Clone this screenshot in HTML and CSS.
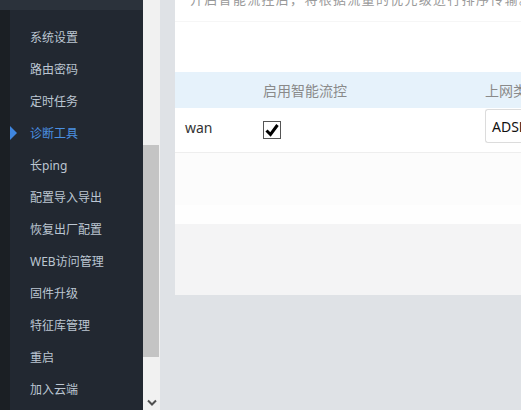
FILE: index.html
```html
<!DOCTYPE html>
<html lang="zh">
<head>
<meta charset="utf-8">
<link rel="stylesheet" href="styles.css">
</head>
<body>
<div class="app">
  <aside class="sidebar">
    <div class="side-top"></div>
    <div class="side-body">
      <div class="side-rail"></div>
      <ul class="menu">
        <li class="item">系统设置</li>
        <li class="item">路由密码</li>
        <li class="item">定时任务</li>
        <li class="item active">诊断工具</li>
        <li class="item">长ping</li>
        <li class="item">配置导入导出</li>
        <li class="item">恢复出厂配置</li>
        <li class="item">WEB访问管理</li>
        <li class="item">固件升级</li>
        <li class="item">特征库管理</li>
        <li class="item">重启</li>
        <li class="item">加入云端</li>
      </ul>
    </div>
  </aside>
  <div class="scrollbar">
    <div class="track">
      <div class="thumb"></div>
    </div>
    <div class="arrow">
      <svg width="10" height="7" viewBox="0 0 10 7"><path d="M1 1.5 L5 5.5 L9 1.5" fill="none" stroke="#505050" stroke-width="2"/></svg>
    </div>
  </div>
  <main class="main">
    <section class="panel">
      <p class="desc">开启智能流控后，将根据流量的优先级进行排序传输。</p>
      <div class="spacer"></div>
      <div class="thead">
        <span></span>
        <span>启用智能流控</span>
        <span>上网类型</span>
      </div>
      <div class="trow">
        <span class="name">wan</span>
        <span class="check">
          <svg width="18" height="18" viewBox="0 0 18 18"><rect x="0.5" y="0.5" width="17" height="17" fill="#fff" stroke="#555"/><path d="M3.5 9.5 L7.5 13.5 L14.5 4" fill="none" stroke="#000" stroke-width="3"/></svg>
        </span>
        <span class="select">ADSL拨号</span>
      </div>
      <div class="band-a"></div>
      <div class="band-b"></div>
      <div class="band-c"></div>
    </section>
  </main>
</div>
</body>
</html>
```
FILE: styles.css
```css
* { box-sizing: border-box; }
html, body { margin: 0; padding: 0; }
body {
  background: #dfe2e6;
  font-family: "Noto Sans", "Noto Sans CJK SC", sans-serif;
  overflow: hidden;
  width: 521px;
  height: 410px;
}
.app {
  display: flex;
  height: 410px;
}
.sidebar {
  width: 143px;
  flex: none;
  display: flex;
  flex-direction: column;
  background: #222831;
}
.side-top {
  height: 10px;
  background: #2b323b;
}
.side-body {
  flex: 1;
  display: flex;
}
.side-rail {
  width: 10px;
  background: #1b1f24;
}
.menu {
  list-style: none;
  margin: 0;
  padding: 11px 0 0 0;
  flex: 1;
}
.item {
  height: 32px;
  display: flex;
  align-items: center;
  padding-left: 20px;
  font-size: 12px;
  color: #bcc6d2;
  position: relative;
}
.item.active { color: #4a90e2; }
.item.active::before {
  content: "";
  position: absolute;
  left: 0;
  top: 9px;
  border-left: 7px solid #3f86e0;
  border-top: 7px solid transparent;
  border-bottom: 7px solid transparent;
}
.scrollbar {
  width: 17px;
  flex: none;
  background: #f1f1f1;
  display: flex;
  flex-direction: column;
}
.track {
  flex: 1;
  padding-top: 145px;
}
.thumb {
  width: 16px;
  height: 212px;
  background: #c4c4c4;
}
.arrow {
  height: 17px;
  display: flex;
  align-items: center;
  justify-content: center;
  padding-top: 2px;
}
.main {
  flex: 1;
  padding-left: 15px;
  overflow: hidden;
}
.panel {
  background: #fff;
  height: 295px;
  overflow: hidden;
}
.desc {
  margin: -11px 0 0 0;
  padding-left: 15px;
  height: 33px;
  line-height: 20px;
  font-size: 13px;
  letter-spacing: 1.3px;
  color: #999;
  white-space: nowrap;
  border-bottom: 1px solid #f6f6f6;
}
.spacer { height: 50px; }
.thead, .trow {
  display: grid;
  grid-template-columns: 88px 222px 1fr;
  white-space: nowrap;
}
.thead {
  height: 36px;
  background: #e6f2fb;
  align-items: center;
  font-size: 14px;
  color: #8a8a8a;
}
.trow {
  height: 45px;
  align-items: center;
  border-bottom: 1px solid #eeeeee;
  font-size: 14px;
  color: #333;
}
.name { padding-left: 10px; margin-top: -5px; }
.check { display: flex; margin-top: -1px; }
.select {
  height: 34px;
  border: 1px solid #dcdcdc;
  border-right: none;
  border-radius: 3px 0 0 3px;
  padding-left: 6px;
  display: flex;
  align-items: center;
  color: #111;
  margin-top: -8px;
  font-size: 14px;
}
.band-a { height: 52px; background: #fcfcfc; }
.band-b { height: 19px; background: #fefefe; }
.band-c { height: 72px; background: #f4f4f5; }
```
